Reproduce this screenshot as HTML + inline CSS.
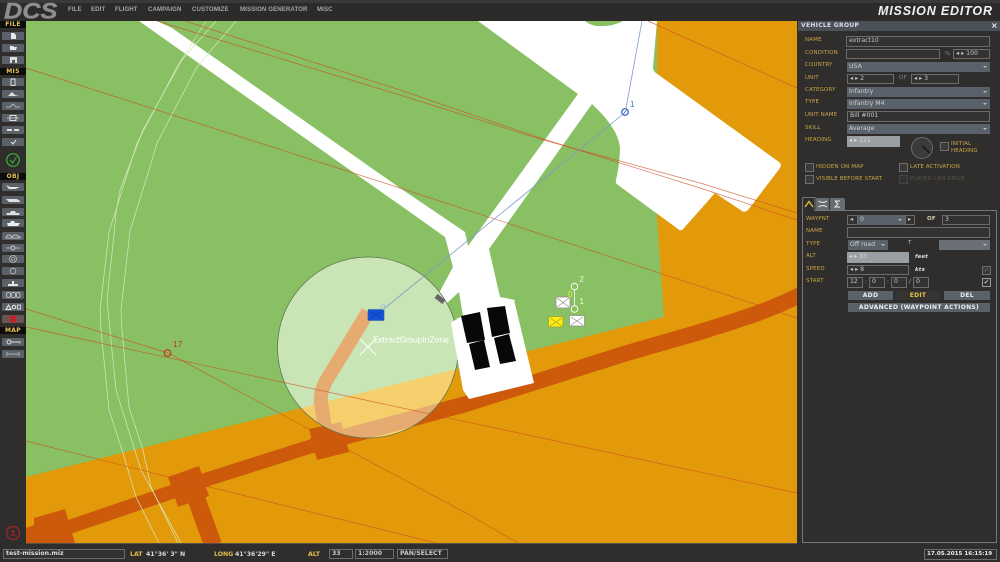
<!DOCTYPE html>
<html><head><meta charset="utf-8"><style>
html,body{margin:0;padding:0;background:#2e2d2b}
#r{position:relative;width:1000px;height:562px;overflow:hidden;background:#2e2d2b;font-family:"DejaVu Sans","Liberation Sans",sans-serif}
#r div{position:absolute;box-sizing:border-box;white-space:nowrap}
.m{top:6px;font-family:"Liberation Sans",sans-serif;font-size:6.1px;font-weight:bold;color:#a5a5a5;letter-spacing:.1px;line-height:8px}
.l{font-size:5.5px;color:#c9a643;letter-spacing:.15px;line-height:8px}
.i{border:1px solid #6c6c6a;background:#333231;color:#c8c8c8;font-size:6.2px;line-height:8px;padding-left:2px}
.s{background:#59626a;color:#d0d0d0;font-size:6.2px;line-height:10px;padding-left:2px}
.s:after{content:"";position:absolute;right:3px;top:4px;border:2px solid transparent;border-top:2.5px solid #bbb}
.d{background:#9a9fa3;color:#dcdcdc;font-size:6.2px;line-height:10px;padding-left:2px}
.c{border:1px solid #6e6e6c;background:#3a3a39;width:9px;height:9px}
.b{background:#5a6269;color:#eee;font-size:6px;font-weight:bold;text-align:center;line-height:9px;letter-spacing:.3px}
.h{left:0;width:26px;background:#0d0d0c;color:#e8c35a;font-size:6px;font-weight:bold;text-align:center;line-height:7px;height:7px;letter-spacing:.3px}
.t{left:2px;width:22px;height:8px;background:#5a6168;border-radius:1px}
.t svg{position:absolute;left:0;top:0}
.w{font-size:6.2px;color:#d8d8d8;line-height:8px;font-weight:bold;top:551px}
.y{font-size:6.2px;color:#e0bd50;line-height:8px;font-weight:bold;top:551px}
</style></head><body><div id="r">

<svg style="position:absolute;left:0;top:0" width="1000" height="562" viewBox="0 0 1000 562">
<defs><clipPath id="z"><circle cx="368" cy="347.500" r="90.500"/></clipPath></defs>
<rect x="26" y="21" width="771" height="522" fill="#e29a0a"/>
<path d="M26 21H657L657 217L664 317L26 477Z" fill="#88c063"/>
<!-- roads -->
<g fill="none" stroke="#cc5a0a">
<path d="M26 541L72 526L172 492L205 480L312 446" stroke-width="14"/>
<path d="M312 446L329 441L466 404L627 353L700 332C745 318 770 310 800 295" stroke-width="16"/>
<path d="M195 495L213 545" stroke-width="18"/>
</g>
<g fill="#cc5a0a">
<path d="M26 528L34 525L34 518L65 509L75 543H26Z"/>
<path d="M168 477L199 466L209 496L178 507Z"/>
<path d="M309 429L341 422L349 452L317 460Z"/>
</g>
<!-- concrete -->
<path fill="#fff" d="M478 21L578 94L468 246L465 232L400 188L172 28L157 21H139L340 163L400 205L445 237L453 267L439 293L447 303L459 292L463 316L500 320L515 300L500 297L489 249L592 104Q620 130 620 150Q619 168 616 180Q615 183 618 185L678 229Q681 232 684 228L715 193L742 211Q745 213 748 210L780 168Q782 164 779 162L656 73Q653 71 653 67L657 21Z"/>
<path fill="#88c063" d="M585 21H623Q612 27 597 26Q590 25 585 21Z"/>
<!-- thin road lines -->
<g fill="none" stroke="#d6e8bf" stroke-width=".7">
<path d="M206 21L177 67L137 143L115 213L109 232L100 310L101 330L109 410L123 453L136 497L159 543"/>
<path d="M216 21L182 60L143 130L120 190L116 213L114 235L107 300L110 330L116 390L141 470L181 543"/>
<path d="M236 21L197 67L157 143L149 170L130 231L121 310L122 330L129 407L143 450L151 487L178 543"/>
</g>
<!-- zone -->
<circle cx="368" cy="347.500" r="90.500" fill="#fff" fill-opacity=".55"/>
<g clip-path="url(#z)">
<circle cx="368" cy="347.500" r="91" fill="#c9e5b6"/>
<path d="M26 477L664 317V543H26Z" fill="#f5cf6c"/>
<g fill="none" stroke="#e6ab71">
<path d="M312 446L329 441L466 404" stroke-width="16"/>
<path d="M368 312L326 381Q320 392 321 402L325 428" stroke-width="14"/>
</g>
<path d="M309 429L341 422L349 452L317 460Z" fill="#e6ab71"/>
</g>
<circle cx="368" cy="347.500" r="90.500" fill="none" stroke="#55704a" stroke-width=".7"/>
<!-- red lines -->
<g fill="none" stroke="#cf4a20" stroke-width=".7" stroke-opacity=".75">
<path d="M185 21L400 90L540 138L700 188L797 220"/>
<path d="M157 21L400 95L540 139L700 183L797 213"/>
<path d="M648 21L797 88"/>
<path d="M26 68L400 188L797 318"/>
<path d="M26 327L797 493"/>
<path d="M26 309L168 353L309 429L466 513L518 543"/>
<path d="M26 441L169 477L436 543"/>
</g>
<!-- airport building -->
<path fill="#fff" d="M514 300L534 383L469 399L463 390L451 323L458 318Z"/>
<g fill="#080808">
<path d="M461 316L480 312L485 340L467 343Z"/>
<path d="M487 308L505 306L510 333L492 337Z"/>
<path d="M469 344L484 340L490 367L475 370Z"/>
<path d="M494 338L509 334L516 361L500 364Z"/>
</g>
<rect x="435" y="296.500" width="10" height="5" fill="#666" transform="rotate(38 440 299)"/>
<!-- blue route -->
<g fill="none" stroke="#7f9bc8" stroke-width=".8">
<path d="M642 21L626 108"/><path d="M622 115L380 312"/>
</g>
<circle cx="625" cy="112" r="3.300" fill="none" stroke="#2a5cc0" stroke-width="1.200"/>
<path d="M623.500 114L626.500 110" stroke="#2a5cc0" stroke-width=".7"/>
<text x="630" y="107" font-family="Liberation Sans" font-size="8" fill="#3c74d0">1</text>
<rect x="368" y="309.500" width="16" height="11" rx="1" fill="#1550d8" stroke="#2a5a9a" stroke-width=".6"/>
<path d="M371 312L381 318M381 312L371 318" stroke="#0c3aa0" stroke-width=".6"/>
<text x="381" y="310" font-family="Liberation Sans" font-size="8" fill="#8ab8f0">0</text>
<!-- white X + zone name -->
<path d="M360 339L376 355M376 339L360 355" stroke="#fff" stroke-width="1"/>
<text x="373" y="342.500" font-family="DejaVu Sans" font-size="8.300" fill="#fff" textLength="76">ExtractGroupInZone</text>
<!-- wp17 -->
<circle cx="167.500" cy="353" r="3.300" fill="none" stroke="#c8200f" stroke-width="1"/>
<text x="173" y="347" font-family="Liberation Sans" font-size="8.500" fill="#c8321e">17</text>
<!-- markers -->
<path d="M574.500 290V306" stroke="#fff" stroke-width=".8"/>
<circle cx="574.500" cy="286.500" r="3.300" fill="none" stroke="#fff" stroke-width="1"/>
<circle cx="574.500" cy="309" r="3.300" fill="none" stroke="#fff" stroke-width="1"/>
<g stroke="#8a8a8a" stroke-width=".7">
<rect x="556" y="297" width="14" height="11" rx="1" fill="#fff"/><path d="M557 298L569 307M569 298L557 307" fill="none"/>
<rect x="569.500" y="315.500" width="15" height="10.500" rx="1" fill="#fff"/><path d="M571 317L583 325M583 317L571 325" fill="none"/>
<rect x="548.500" y="316.500" width="14.500" height="10.500" rx="1" fill="#fcec10" stroke="#9a9a30"/><path d="M550 318L562 326M562 318L550 326" fill="none" stroke="#9a9a30"/>
</g>
<g font-family="Liberation Sans" font-size="8">
<text x="579.500" y="282" fill="#eef5e0">2</text><text x="579.500" y="304" fill="#eef5e0">1</text><text x="568" y="297" fill="#e8ee40">0</text>
</g>
<!-- bars -->
<rect x="0" y="0" width="1000" height="21" fill="#2c2b2a"/>
<rect x="0" y="0" width="1000" height="3" fill="#4a4a48" opacity=".5"/>
<rect x="0" y="21" width="26" height="522" fill="#2f2e2d"/>
<rect x="797" y="21" width="203" height="522" fill="#2f2e2d"/>
<rect x="0" y="543" width="1000" height="19" fill="#2f2e2d"/>
<rect x="26" y="543" width="771" height="1" fill="#55534a"/>
<!-- logo -->
<text transform="translate(4 18.500) scale(1.15 1)" font-family="Liberation Sans" font-weight="bold" font-style="italic" font-size="22" fill="#8e8e8e" stroke="#8e8e8e" stroke-width=".4">DCS</text>
<text x="878" y="15" font-family="Liberation Sans" font-weight="bold" font-style="italic" font-size="12.500" fill="#f2f2f2" textLength="114">MISSION EDITOR</text>
<!-- dial -->
<circle cx="922" cy="148" r="10.500" fill="#3b3b3a" stroke="#6a6a68" stroke-width="1"/>
<path d="M922 146L930 153" stroke="#111" stroke-width="1.200"/>
<!-- status circles -->
<circle cx="13" cy="160" r="6.300" fill="none" stroke="#3fae3c" stroke-width="1.200"/>
<path d="M10 160L12.500 163L16.500 157" fill="none" stroke="#3fae3c" stroke-width="1"/>
<circle cx="13" cy="533" r="6.500" fill="none" stroke="#b8232a" stroke-width="1"/>
<circle cx="13" cy="531.500" r="1.300" fill="#b8232a"/><path d="M10.500 535H15.500" stroke="#b8232a"/>
</svg>

<div class="m" style="left:68px">FILE</div>
<div class="m" style="left:91px">EDIT</div>
<div class="m" style="left:115px">FLIGHT</div>
<div class="m" style="left:148px">CAMPAIGN</div>
<div class="m" style="left:192px">CUSTOMIZE</div>
<div class="m" style="left:240px">MISSION GENERATOR</div>
<div class="m" style="left:317px">MISC</div>

<!-- left toolbar -->
<div class="h" style="top:21px">FILE</div>
<div class="t" style="top:32px"><svg width="22" height="8"><path d="M9 1H12L14 3V7H9Z" fill="#e8e8e8"/></svg></div>
<div class="t" style="top:44px"><svg width="22" height="8"><path d="M8 2H11L12 3H15L14 6H8Z" fill="#e8e8e8"/></svg></div>
<div class="t" style="top:56px"><svg width="22" height="8"><path d="M8 1H15V7H8Z" fill="#ddd"/><path d="M10 4H13V7H10Z" fill="#555"/></svg></div>
<div class="h" style="top:68px">MIS</div>
<div class="t" style="top:78px"><svg width="22" height="8"><rect x="9" y="1" width="4" height="6.500" fill="none" stroke="#ddd"/></svg></div>
<div class="t" style="top:90px"><svg width="22" height="8"><path d="M6 6L10 2L13 5L17 6Z" fill="#ddd"/></svg></div>
<div class="t" style="top:102px"><svg width="22" height="8"><path d="M4 5H8L11 2L14 5H18" fill="none" stroke="#ccc" stroke-width=".8"/></svg></div>
<div class="t" style="top:114px"><svg width="22" height="8"><rect x="8" y="1.500" width="6" height="5" fill="none" stroke="#ddd"/><path d="M5 4H17" stroke="#ddd" stroke-width=".7"/></svg></div>
<div class="t" style="top:126px"><svg width="22" height="8"><path d="M5 3H10V5H5ZM12 3H17V5H12Z" fill="#ddd"/></svg></div>
<div class="t" style="top:138px"><svg width="22" height="8"><path d="M9 4L11 6L14 2" fill="none" stroke="#eee"/></svg></div>
<div class="h" style="top:173px">OBJ</div>
<div class="t" style="top:183px"><svg width="22" height="8"><path d="M4 2L8 4H18L13 6H7Z" fill="#e8e8e8"/></svg></div>
<div class="t" style="top:196px"><svg width="22" height="8"><path d="M4 3H15L18 5V6H7Z" fill="#e0e0e0"/></svg></div>
<div class="t" style="top:208px"><svg width="22" height="8"><path d="M4 5H8L9 3H13L14 5H18L17 7H5Z" fill="#ddd"/></svg></div>
<div class="t" style="top:219px"><svg width="22" height="8"><path d="M5 4H8L9 2H12L13 4H18L16 7H6Z" fill="#eee"/></svg></div>
<div class="t" style="top:232px"><svg width="22" height="8"><path d="M4 5L6 3H8L10 5L12 3H14L18 5V6H4Z" fill="none" stroke="#ddd" stroke-width=".8"/></svg></div>
<div class="t" style="top:244px"><svg width="22" height="8"><circle cx="11" cy="4" r="2" fill="none" stroke="#ccc"/><path d="M4 4H9M13 4H18" stroke="#ccc" stroke-width=".7"/></svg></div>
<div class="t" style="top:255px"><svg width="22" height="8"><circle cx="11" cy="4" r="3.500" fill="none" stroke="#bbb" stroke-width=".8"/><circle cx="11" cy="4" r="1.500" fill="none" stroke="#bbb" stroke-width=".6"/></svg></div>
<div class="t" style="top:267px"><svg width="22" height="8"><circle cx="11" cy="4" r="2.800" fill="none" stroke="#bbb" stroke-width=".8"/></svg></div>
<div class="t" style="top:279px"><svg width="22" height="8"><path d="M6 5H16V7H6ZM10 2H12V5H10Z" fill="#e5e5e5"/></svg></div>
<div class="t" style="top:291px"><svg width="22" height="8"><g fill="none" stroke="#ccc" stroke-width=".8"><rect x="4.500" y="1.500" width="4" height="5" rx="1.500"/><rect x="9.500" y="1.500" width="4" height="5" rx="1.500"/><rect x="14.500" y="1.500" width="3.500" height="5" rx="1.500"/></g></svg></div>
<div class="t" style="top:303px"><svg width="22" height="8"><path d="M4 6.500L6.500 2L9 6.500Z" fill="none" stroke="#eee"/><circle cx="12" cy="4" r="1.800" fill="none" stroke="#eee"/><rect x="15.500" y="2" width="3" height="4" fill="none" stroke="#eee" stroke-width=".8"/></svg></div>
<div class="t" style="top:315px;background:#6a5554"><svg width="22" height="8"><path d="M8.500 1L13.500 7M13.500 1L8.500 7" stroke="#e01010" stroke-width="2"/></svg></div>
<div class="h" style="top:327px">MAP</div>
<div class="t" style="top:338px"><svg width="22" height="8"><circle cx="7" cy="4" r="2" fill="none" stroke="#ddd"/><path d="M9 4H18V5.500" fill="none" stroke="#ddd"/></svg></div>
<div class="t" style="top:350px"><svg width="22" height="8"><path d="M5 2V6M17 2V6M6 4H16" stroke="#ccc" stroke-width=".8"/></svg></div>

<!-- vehicle group panel -->
<div style="left:798px;top:21px;width:202px;height:10px;background:#4a5157;color:#dde;font-size:6px;font-weight:bold;line-height:10px;padding-left:3px;letter-spacing:.3px">VEHICLE GROUP</div>
<div style="left:991px;top:21px;color:#eee;font-size:8px;line-height:10px;font-weight:bold">×</div>

<div class="l" style="left:805px;top:36px">NAME</div><div class="i" style="left:846px;top:36px;width:144px;height:11px">extract10</div>
<div class="l" style="left:805px;top:49px">CONDITION</div><div class="i" style="left:846px;top:49px;width:94px;height:10px"></div>
<div class="l" style="left:945px;top:50px;color:#888">%</div><div class="i" style="left:953px;top:49px;width:37px;height:10px">◂ ▸ 100</div>
<div class="l" style="left:805px;top:61px">COUNTRY</div><div class="s" style="left:847px;top:62px;width:143px;height:10px">USA</div>
<div class="l" style="left:805px;top:74px">UNIT</div><div class="i" style="left:847px;top:74px;width:47px;height:10px">◂ ▸ 2</div>
<div class="l" style="left:899px;top:74px;color:#888">OF</div><div class="i" style="left:911px;top:74px;width:48px;height:10px">◂ ▸ 3</div>
<div class="l" style="left:805px;top:86px">CATEGORY</div><div class="s" style="left:847px;top:87px;width:143px;height:10px">Infantry</div>
<div class="l" style="left:805px;top:98px">TYPE</div><div class="s" style="left:847px;top:99px;width:143px;height:10px">Infantry M4</div>
<div class="l" style="left:805px;top:111px">UNIT NAME</div><div class="i" style="left:847px;top:111px;width:143px;height:11px">Bill #001</div>
<div class="l" style="left:805px;top:124px">SKILL</div><div class="s" style="left:847px;top:124px;width:143px;height:10px">Average</div>
<div class="l" style="left:805px;top:136px">HEADING</div><div class="d" style="left:847px;top:136px;width:53px;height:11px">◂ ▸ 121</div>
<div class="c" style="left:940px;top:142px"></div>
<div class="l" style="left:951px;top:140px">INITIAL</div><div class="l" style="left:951px;top:147px">HEADING</div>
<div class="c" style="left:805px;top:163px"></div><div class="l" style="left:816px;top:163px">HIDDEN ON MAP</div>
<div class="c" style="left:899px;top:163px"></div><div class="l" style="left:910px;top:163px">LATE ACTIVATION</div>
<div class="c" style="left:805px;top:175px"></div><div class="l" style="left:816px;top:175px">VISIBLE BEFORE START</div>
<div class="c" style="left:899px;top:175px;border-color:#444;background:#333"></div><div class="l" style="left:910px;top:175px;color:#56534a">PLAYER CAN DRIVE</div>

<!-- tabs + waypoint box -->
<div style="left:802px;top:210px;width:195px;height:333px;border:1px solid #777"></div>
<svg style="position:absolute;left:802px;top:197px" width="44" height="15"><path d="M.5 14V2Q.5 .5 2 .5H13V14" fill="#2f2e2d" stroke="#777"/><path d="M3 10L7 4.500L11 10" fill="none" stroke="#e8c040" stroke-width="1.300"/><path d="M14 13V2Q14 1 15 1H27V13Z" fill="#666d72"/><path d="M28 13V1H41Q43 1 43 3V13Z" fill="#666d72"/><path d="M16.500 4Q21 7 25 4M16.500 10Q21 7 25 10" fill="none" stroke="#eee"/><path d="M33 4H38M33 4L36 7L33 10H38" fill="none" stroke="#eee"/></svg>

<div class="l" style="left:806px;top:215px">WAYPNT</div>
<div class="i" style="left:847px;top:215px;width:11px;height:10px;padding-left:2px">◂</div>
<div class="s" style="left:858px;top:215px;width:47px;height:10px">0</div>
<div class="i" style="left:905px;top:215px;width:10px;height:10px;padding-left:2px">▸</div>
<div class="l" style="left:927px;top:215px;color:#d8d0b0;font-weight:bold">OF</div>
<div class="i" style="left:942px;top:215px;width:48px;height:10px">3</div>
<div class="l" style="left:806px;top:227px">NAME</div><div class="i" style="left:847px;top:227px;width:143px;height:11px"></div>
<div class="l" style="left:806px;top:240px">TYPE</div><div class="s" style="left:848px;top:240px;width:40px;height:10px">Off road</div>
<div class="l" style="left:908px;top:239px;color:#bbb">T</div><div class="s" style="left:939px;top:240px;width:51px;height:10px;background:#6a7075"></div>
<div class="l" style="left:806px;top:252px">ALT</div><div class="d" style="left:847px;top:252px;width:62px;height:11px">◂ ▸ 33</div>
<div class="l" style="left:915px;top:253px;color:#ddd;font-weight:bold;font-style:italic">feet</div>
<div class="l" style="left:806px;top:265px">SPEED</div><div class="i" style="left:847px;top:265px;width:62px;height:10px">◂ ▸ 8</div>
<div class="l" style="left:915px;top:266px;color:#ddd;font-weight:bold;font-style:italic">kts</div>
<div class="c" style="left:982px;top:266px;color:#777;font-size:7px;line-height:7px;text-align:center">✓</div>
<div class="l" style="left:806px;top:277px">START</div>
<div class="i" style="left:847px;top:277px;width:16px;height:11px">12</div>
<div class="l" style="left:865px;top:278px;color:#bbb">:</div>
<div class="i" style="left:869px;top:277px;width:16px;height:11px">0</div>
<div class="l" style="left:887px;top:278px;color:#bbb">:</div>
<div class="i" style="left:891px;top:277px;width:16px;height:11px">0</div>
<div class="l" style="left:909px;top:278px;color:#bbb">/</div>
<div class="i" style="left:913px;top:277px;width:16px;height:11px">0</div>
<div class="c" style="left:982px;top:278px;color:#eee;font-size:7px;line-height:7px;text-align:center;background:#333;border-color:#999">✓</div>
<div class="b" style="left:848px;top:291px;width:45px;height:9px">ADD</div>
<div class="b" style="left:895px;top:291px;width:46px;height:9px;background:#353433;color:#e8c64c">EDIT</div>
<div class="b" style="left:944px;top:291px;width:46px;height:9px">DEL</div>
<div class="b" style="left:848px;top:303px;width:142px;height:9px">ADVANCED (WAYPOINT ACTIONS)</div>

<!-- status bar -->
<div class="i" style="left:3px;top:549px;width:122px;height:10px;font-weight:bold;color:#ddd;line-height:8px">test-mission.miz</div>
<div class="y" style="left:130px">LAT</div><div class="w" style="left:146px">41°36' 3" N</div>
<div class="y" style="left:214px">LONG</div><div class="w" style="left:235px">41°36'29" E</div>
<div class="y" style="left:308px">ALT</div>
<div class="i" style="left:329px;top:549px;width:24px;height:10px;font-weight:bold;background:#2f2e2d">33</div>
<div class="i" style="left:355px;top:549px;width:39px;height:10px;font-weight:bold;background:#2f2e2d">1:2000</div>
<div class="i" style="left:397px;top:549px;width:51px;height:10px;font-weight:bold;background:#2f2e2d">PAN/SELECT</div>
<div class="i" style="left:924px;top:549px;width:73px;height:11px;font-size:5.600px;font-weight:bold;color:#eee;background:#2f2e2d;line-height:9px;padding-left:2px">17.05.2015 16:15:19</div>
</div></body></html>
